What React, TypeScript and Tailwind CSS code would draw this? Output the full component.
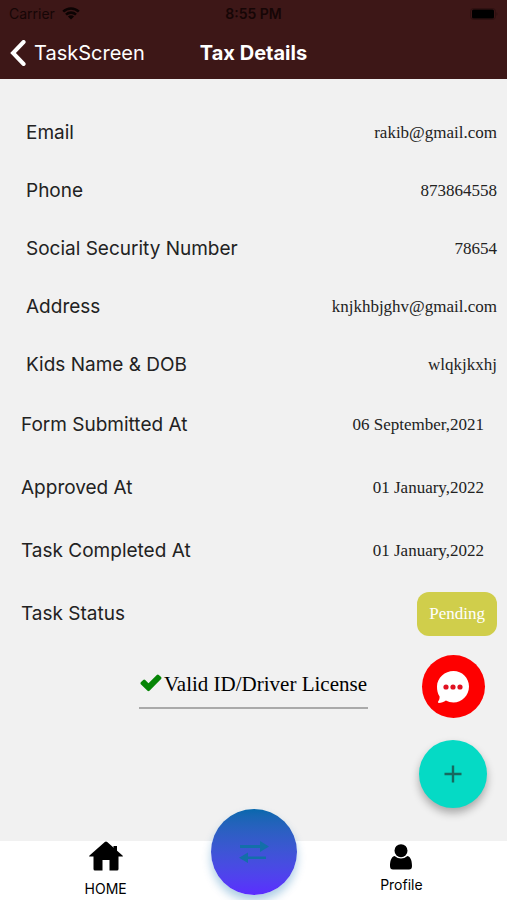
import type { ReactNode } from 'react'

type RowProps = {
  label: string
  children: ReactNode
}

const details = [
  { label: 'Email', value: 'rakib@gmail.com' },
  { label: 'Phone', value: '873864558' },
  { label: 'Social Security Number', value: '78654' },
  { label: 'Address', value: 'knjkhbjghv@gmail.com' },
  { label: 'Kids Name & DOB', value: 'wlqkjkxhj' },
]

const dates = [
  { label: 'Form Submitted At', value: '06 September,2021' },
  { label: 'Approved At', value: '01 January,2022' },
  { label: 'Task Completed At', value: '01 January,2022' },
]

const WifiIcon = () => (
  <svg viewBox="0 0 18 13" className="h-[13px] w-[18px]" aria-hidden="true">
    <path
      d="M1.2 4.6a11.2 11.2 0 0 1 15.6 0M4 7.6a7.2 7.2 0 0 1 10 0"
      fill="none"
      stroke="#0c0303"
      strokeWidth="2.6"
    />
    <path d="M9 12.6 5.9 9.5a4.4 4.4 0 0 1 6.2 0z" fill="#0c0303" />
  </svg>
)

const BatteryIcon = () => (
  <svg viewBox="0 0 28 12" className="h-3 w-7" aria-hidden="true">
    <rect x="0.5" y="0.5" width="25" height="11" rx="3" fill="none" stroke="#2f1111" />
    <rect x="2" y="1.5" width="22" height="9" rx="1.5" fill="#000" />
    <path d="M26.5 4.2v3.6c1.3-.6 1.3-3 0-3.6z" fill="#2f1111" />
  </svg>
)

const BackIcon = () => (
  <svg viewBox="0 0 16 26" className="h-[26px] w-4" aria-hidden="true">
    <path
      d="M13.6 2 3 13l10.6 11"
      fill="none"
      stroke="currentColor"
      strokeWidth="4"
      strokeLinecap="round"
    />
  </svg>
)

const CheckIcon = () => (
  <svg viewBox="0 0 22 18" className="h-[18px] w-[22px]" aria-hidden="true">
    <path
      d="M.8 8.3 3.2 6q1-.9 2 0l3.3 3.2L16.8.9q1-.9 2 0l2.3 2.2q.9 1 0 1.9L9.5 16.7q-1 .9-2 0L.8 10.2q-.8-.9 0-1.9z"
      fill="#068506"
    />
  </svg>
)

const ChatIcon = () => (
  <svg viewBox="0 0 34 34" className="size-[34px]" aria-hidden="true">
    <path
      d="M17.5 1C26 1 33 7.8 33 16.5S26 32.5 17.5 32.5c-2.8 0-5.4-.7-7.6-2-2 1.6-4.6 2.5-7 2.5-1 0-1.2-1-.6-1.7.9-1.3 1.4-3 1.3-4.9C1.6 23.6 1 20.3 1 16.5 1 7.8 9 1 17.5 1z"
      fill="#fff"
    />
    <g fill="#e01020">
      <circle cx="10" cy="17" r="2.6" />
      <circle cx="17" cy="17" r="2.6" />
      <circle cx="24" cy="17" r="2.6" />
    </g>
  </svg>
)

const PlusIcon = () => (
  <svg viewBox="0 0 18 18" className="size-[18px]" aria-hidden="true">
    <path d="M9 .5v17M.5 9h17" stroke="#17695f" strokeWidth="2.4" />
  </svg>
)

const SwapIcon = () => (
  <svg viewBox="0 0 30 22" className="h-[22px] w-[30px]" aria-hidden="true">
    <g fill="#136fa9">
      <path d="M1 4h20V0l9 5.5-9 5.5V7H1z" />
      <path d="M27 15.5H9v-4l-9 5.2L9 22v-4h18z" />
    </g>
  </svg>
)

const HomeIcon = () => (
  <svg viewBox="0 0 34 30" className="h-[30px] w-[34px]" aria-hidden="true">
    <path
      d="M15.8 1q1.2-1 2.4 0l15.3 13.5q1 1-.3 1H29.500V28q0 1.500-1.500 1.500H20.500V19h-7v10.500H6Q4.500 29.500 4.500 28V15.500H.8q-1.300 0-.3-1z"
      fill="#000"
    />
    <path d="M24.5 5H28v6.5l-3.500-2z" fill="#000" />
  </svg>
)

const PersonIcon = () => (
  <svg viewBox="0 0 22 26" className="h-[26px] w-[22px]" aria-hidden="true">
    <circle cx="11" cy="6.7" r="6.5" />
    <path d="M4.5 12q6.5 5 13 0C21 13 22 17.5 22 22q0 3.5-3 3.5H3q-3 0-3-3.5C0 17.5 1 13 4.5 12z" />
  </svg>
)

const DetailRow = ({ label, children }: RowProps) => (
  <div className="flex h-[58px] items-center justify-between pr-[10px] pl-[26px]">
    <dt className="pt-[2px]">{label}</dt>
    <dd className="pt-[2px] font-['Liberation_Serif',serif] text-[17px]">{children}</dd>
  </div>
)

const StatusRow = ({ label, children }: RowProps) => (
  <div className="flex h-[63px] items-center justify-between pr-[10px] pl-[21px]">
    <dt className="pt-[2px]">{label}</dt>
    <dd className="font-['Liberation_Serif',serif] text-[17px]">{children}</dd>
  </div>
)

const Header = () => (
  <header className="h-[79px] bg-[#3d1717]">
    <div className="grid h-[27px] grid-cols-3 items-center px-[9px] text-sm text-[#160606]">
      <div className="flex items-center gap-[7px]">
        <span>Carrier</span>
        <WifiIcon />
      </div>
      <span className="text-center font-semibold">8:55 PM</span>
      <div className="flex justify-end">
        <BatteryIcon />
      </div>
    </div>
    <div className="grid h-[52px] grid-cols-[1fr_auto_1fr] items-center px-[10px] text-xl text-white">
      <button type="button" className="flex items-center gap-2">
        <BackIcon />
        TaskScreen
      </button>
      <h1 className="font-bold">Tax Details</h1>
    </div>
  </header>
)

const TabBar = () => (
  <nav className="relative grid h-[59px] grid-cols-[5fr_2fr_5fr] bg-white text-sm text-black">
    <a href="#home" className="flex flex-col items-center">
      <HomeIcon />
      <span className="mt-2">HOME</span>
    </a>
    <button
      type="button"
      aria-label="Switch"
      className="absolute bottom-[5px] left-1/2 flex size-[86px] -translate-x-1/2 items-center justify-center rounded-full bg-linear-to-b from-[#0768ad] to-[#5b2cff] shadow-[0_6px_10px_#0768ad55]"
    >
      <SwapIcon />
    </button>
    <a href="#profile" className="col-start-3 flex flex-col items-center pt-[3px]">
      <PersonIcon />
      <span className="mt-[5px]">Profile</span>
    </a>
  </nav>
)

export default function App() {
  return (
    <div className="flex min-h-screen flex-col bg-[#f1f1f1] font-[Inter,sans-serif] text-[#222]">
      <Header />
      <main className="relative flex-1 pt-6">
        <dl className="text-[19px]">
          {details.map((item) => (
            <DetailRow key={item.label} label={item.label}>
              {item.value}
            </DetailRow>
          ))}
          {dates.map((item) => (
            <StatusRow key={item.label} label={item.label}>
              <span className="pr-[13px]">{item.value}</span>
            </StatusRow>
          ))}
          <StatusRow label="Task Status">
            <span className="flex h-11 items-center rounded-xl bg-[#d0ce4b] px-3 text-white">
              Pending
            </span>
          </StatusRow>
        </dl>
        <div className="mt-6 flex justify-center">
          <div className="flex h-10 items-start gap-[2px] border-b-2 border-[#aaa] px-[1px] font-['Liberation_Serif',serif] text-[21px] text-black">
            <div className="pt-[5px]">
              <CheckIcon />
            </div>
            <span>Valid ID/Driver License</span>
          </div>
        </div>
        <div className="absolute right-5 bottom-[33px] flex flex-col items-center gap-[22px]">
          <button
            type="button"
            aria-label="Chat"
            className="flex size-[63px] items-center justify-center rounded-full bg-[#fe0000]"
          >
            <ChatIcon />
          </button>
          <button
            type="button"
            aria-label="Add"
            className="flex size-[68px] items-center justify-center rounded-full bg-[#05dac5] shadow-[0_5px_9px_#0000004d]"
          >
            <PlusIcon />
          </button>
        </div>
      </main>
      <TabBar />
    </div>
  )
}
